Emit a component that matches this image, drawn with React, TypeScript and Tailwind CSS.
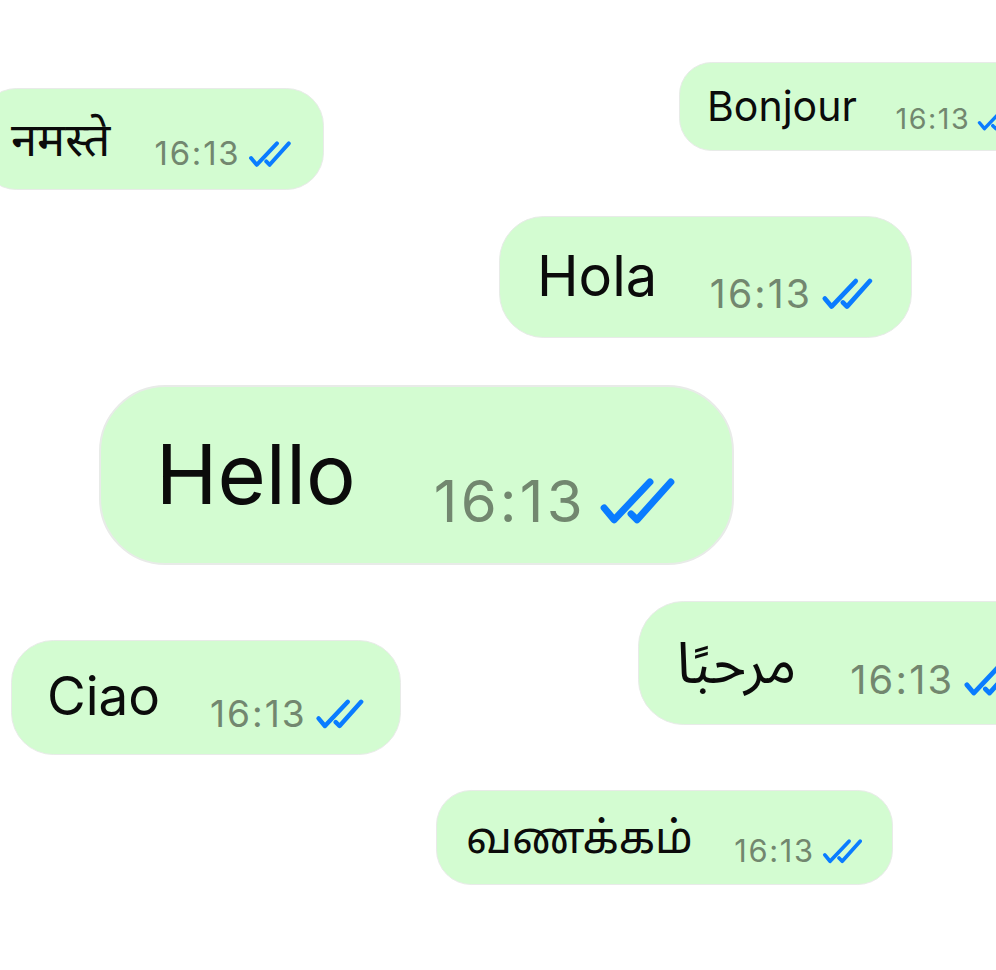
import React from "react";
import clsx from "clsx";

interface Message {
  text: string;
  pos: string;
  size: string;
}

// each bubble is laid out in em, so one font size scales the whole bubble
const MESSAGES: Message[] = [
  { text: "नमस्ते", pos: "left-[-21px] top-[88px]", size: "text-[47px]" },
  { text: "Bonjour", pos: "left-[679px] top-[62px]", size: "text-[41px]" },
  { text: "Hola", pos: "left-[499px] top-[216px]", size: "text-[56px]" },
  { text: "Hello", pos: "left-[99px] top-[385px]", size: "text-[83px]" },
  { text: "مرحبًا", pos: "left-[638px] top-[601px]", size: "text-[57px]" },
  { text: "Ciao", pos: "left-[11px] top-[640px]", size: "text-[53px]" },
  { text: "வணக்கம்", pos: "left-[436px] top-[790px]", size: "text-[44px]" },
];

const DoubleCheck = () => (
  <svg
    viewBox="0 0 78 50"
    className="ml-[0.14em] mt-[0.05em] h-[0.6em] w-[0.94em] shrink-0"
    fill="none"
    stroke="#0a7cff"
    strokeWidth={7}
    strokeLinecap="round"
    strokeLinejoin="round"
  >
    <path d="M7 32 L17 44 L53 6" />
    <path d="M34 38 L40 44 L74 6" />
  </svg>
);

const Bubble: React.FC<Message> = ({ text, pos, size }) => (
  <div
    className={clsx(
      "absolute flex h-[2.17em] items-start whitespace-nowrap rounded-[0.8em] border-[0.025em] border-[#e8ebe8] bg-[#d3fcd1] pl-[0.66em] pr-[0.68em]",
      pos,
      size
    )}
  >
    <span className="mr-[0.94em] mt-[0.556em] leading-none text-[#0b0b0b]">
      {text}
    </span>
    <div className="mt-[1.025em] flex items-start">
      <span className="text-[0.7em] leading-none tracking-[0.055em] text-[#72876f]">
        16:13
      </span>
      <DoubleCheck />
    </div>
  </div>
);

export default function App() {
  return (
    <div className="relative h-[970px] w-full overflow-hidden bg-white font-['Inter','Noto_Sans','Noto_Sans_Devanagari','Noto_Sans_Tamil','Noto_Sans_Arabic','DejaVu_Sans',sans-serif]">
      {MESSAGES.map((m) => (
        <Bubble key={m.text} {...m} />
      ))}
    </div>
  );
}
